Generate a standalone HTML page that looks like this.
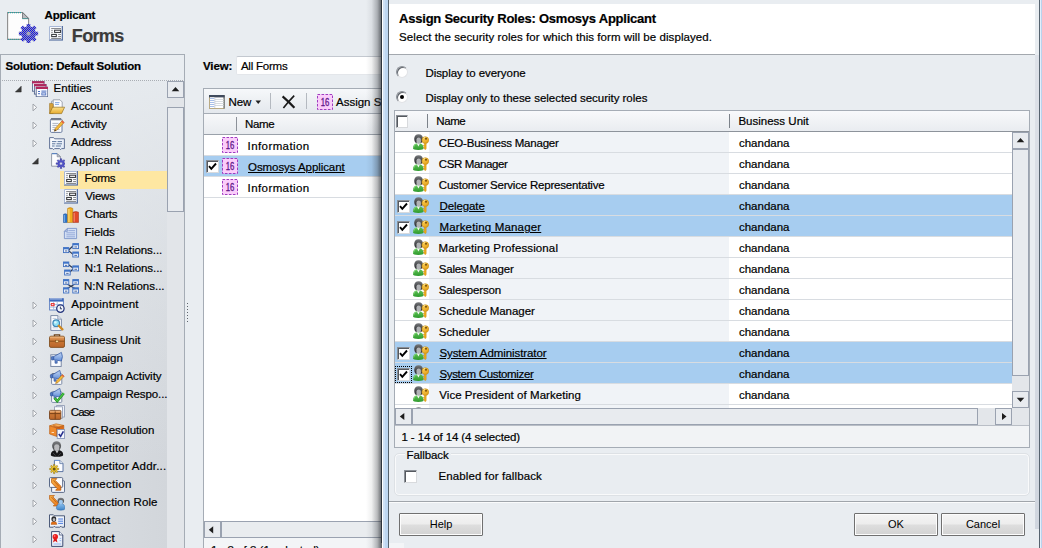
<!DOCTYPE html>
<html lang="en"><head><meta charset="utf-8"><title>Assign Security Roles</title>
<style>
*{box-sizing:border-box;margin:0;padding:0}
html,body{width:1042px;height:548px;overflow:hidden}
body{-webkit-text-stroke-width:.2px;position:relative;background:#e9edf1;font-family:"Liberation Sans",sans-serif;font-size:11px;color:#000}
.a{position:absolute;display:block}
#page{position:absolute;left:0;top:0;width:1042px;height:548px;overflow:hidden}
.t-app{font-weight:bold;font-size:11.5px;line-height:14px;white-space:nowrap}
.t-forms{font-weight:bold;font-size:18px;line-height:22px;color:#3b3b3b;white-space:nowrap}
#lp{left:0;top:54px;width:185px;height:500px;border:1px solid #a5acb5;background:#e9edf1}
#lpbg{left:1px;top:81px;width:166px;height:470px;background:linear-gradient(180deg,rgba(233,237,241,.85) 0,rgba(233,237,241,.64) 80px,rgba(233,237,241,.3) 220px,rgba(233,237,241,0) 380px),linear-gradient(90deg,#e7ebef 0%,#d9dde2 45%,#d2d6db 100%)}
.t-sol{font-weight:bold;font-size:11.5px;line-height:14px;white-space:nowrap}
#dots{left:2px;top:80px;width:182px;height:1px;background:repeating-linear-gradient(90deg,#a9adb3 0 1px,transparent 1px 2px)}
#hl{left:60px;top:171px;width:107px;height:18px;background:#fee7a2}
.tr{font-size:11.5px;line-height:18px;white-space:nowrap;height:18px}
#tsb{left:167px;top:81px;width:17px;height:470px;background:#e2e5e9}
.sbtn{background:#e8ebef;border:1px solid #9aa2b0}
.sbtn svg{display:block}
#tthumb{left:167px;top:107px;width:17px;height:105px;background:#e8ebef;border:1px solid #9aa2b0}
#split{left:187px;top:303px;width:1px;height:20px;background:repeating-linear-gradient(#5f656d 0 1px,transparent 1px 3px)}
.t-view{font-weight:bold;font-size:11.5px;line-height:14px}
#viewsel{left:236px;top:56px;width:200px;height:19px;background:#fff;border:1px solid #e3e6ea;border-top-color:#c3c8cf;border-radius:2px}
#rgrid{left:203px;top:88px;width:200px;height:470px;background:#fff;border:1px solid #a5acb5}
#rtool{left:204px;top:89px;width:200px;height:25px;background:linear-gradient(#f6f8fa,#e4e8ed);border-bottom:1px solid #a5acb5}
.tb{font-size:11.5px;line-height:16px;white-space:nowrap}
.vsep{width:1px;background:#b4b9c0}
#rhead{left:204px;top:114px;width:200px;height:21px;background:linear-gradient(#f7f8fa,#e8ebef);border-bottom:1px solid #9aa1aa}
.rrow{left:204px;width:200px;height:21px;border-bottom:1px solid #d8dce1}
.rrow.sel,.drow.sel{background:#a7cdf0}
.cb{width:13px;height:13px;background:#fff;border:1px solid #8a8f96;border-right-color:#d8dadd;border-bottom-color:#d8dadd;box-shadow:inset 1px 1px 0 #55595f}
.cb svg{display:block;position:absolute;left:0;top:0}
.lnk{text-decoration:underline}
#rhsb{left:204px;top:521px;width:200px;height:17px;background:#e9ecef;border-top:1px solid #a5acb5;border-bottom:1px solid #a5acb5}
#rstat{left:204px;top:538px;width:200px;height:12px;background:#f3f5f7}
#shadow{left:366px;top:-10px;width:16px;height:570px;background:linear-gradient(90deg,rgba(40,44,50,0) 0%,rgba(40,44,50,.07) 35%,rgba(40,44,50,.32) 70%,rgba(40,44,50,.74) 100%)}
#dlg{left:0;top:0;width:1042px;height:548px;pointer-events:none}
#dlg:before{content:"";position:absolute;left:381px;top:-5px;width:670px;height:548px;background:#e9edf1;border-left:1px solid #2d343d}
#dlg:after{content:"";position:absolute;left:382px;top:-5px;width:7px;height:560px;background:linear-gradient(90deg,#fff 0 1px,#cfe1f5 1px 3px,#bdd6f1 3px 6px,#56636f 6px 7px)}
#dhead{left:389px;top:4px;width:646px;height:50px;background:#fff}
#dhead:after{content:"";position:absolute;left:0;top:50px;width:646px;height:1px;background:#a3a8ae}
.d-title{font-weight:bold;font-size:13px;line-height:16px;white-space:nowrap}
.d-sub{font-size:11.5px;line-height:14px;white-space:nowrap}
.dt{font-size:11.5px;line-height:16px;white-space:nowrap}
.radio{width:12px;height:12px;border-radius:50%;background:#fff;border:1px solid #8a8f96;border-right-color:#e1e3e6;border-bottom-color:#e1e3e6;box-shadow:inset 1px 1px 0 #60656c}
.radio i{position:absolute;left:3px;top:3px;width:4px;height:4px;border-radius:50%;background:#000}
#dgrid{left:394px;top:110px;width:636px;height:338px;background:#fff;border:1px solid #a5acb5}
#dghead{left:395px;top:111px;width:634px;height:21px;background:linear-gradient(#f8f9fb,#e9ecf0);border-bottom:1px solid #8d939b}
#namecol{left:429px;top:132px;width:300px;height:276px;background:#f0f3f7}
.drow{left:395px;width:617px;height:21px;border-bottom:1px solid #d8dce1}
#dvsb{left:1012px;top:132px;width:17px;height:276px;background:#e3e6ea}
#dvthumb{left:1012px;top:149px;width:17px;height:227px;background:#e8ebef;border:1px solid #9aa2b0}
#dhsb{left:395px;top:408px;width:634px;height:18px;background:#e3e6ea;border-bottom:1px solid #b9bec6}
#dhthumb{left:412px;top:408px;width:566px;height:17px;background:#e8ebef;border:1px solid #9aa2b0}
#fs{left:394px;top:453px;width:636px;height:43px;border:1px solid #dde1e5;border-radius:5px;box-shadow:inset 0 0 0 1px #f9fafb}
#fsl{left:405px;top:452px;width:46px;height:4px;background:#e9edf1}
#dsep{left:389px;top:501px;width:646px;height:2px;background:linear-gradient(#a0a5ab 0 1px,#fafbfc 1px 2px)}
.btn{-webkit-text-stroke-width:0;height:23px;border:1px solid #707070;background:linear-gradient(#f4f4f4 0,#ededed 48%,#dedede 52%,#d2d2d2 100%);box-shadow:inset 0 0 0 1px #fcfcfc;font-size:11px;line-height:21px;text-align:center;border-radius:1px}
#status{left:395px;top:426px;width:634px;height:21px;background:#f1f3f5}
#rframe{left:1039px;top:-5px;width:3px;height:560px;background:linear-gradient(90deg,#56636f 0 1px,#e4effa 1px 2px,#b9d3ee 2px 3px)}
#rstrip{left:1035px;top:55px;width:4px;height:474px;background:linear-gradient(#dde1e8,#d0d6df)}
.n16{width:16px;height:16px;font-size:10.5px;line-height:16px;text-align:center;color:#5e1488;-webkit-text-stroke-width:.3px;transform:scaleX(.74)}
</style></head>
<body>
<svg width="0" height="0" style="position:absolute"><defs><linearGradient id="g-fold" x1="0" y1="0" x2="0" y2="1"><stop offset="0" stop-color="#fbe08c"/><stop offset="1" stop-color="#e7ab2c"/></linearGradient><linearGradient id="g-brown" x1="0" y1="0" x2="0" y2="1"><stop offset="0" stop-color="#e7a468"/><stop offset=".45" stop-color="#c97634"/><stop offset="1" stop-color="#b9642a"/></linearGradient><linearGradient id="g-org" x1="0" y1="0" x2="1" y2="1"><stop offset="0" stop-color="#f9b54e"/><stop offset="1" stop-color="#e8761a"/></linearGradient><linearGradient id="g-head" x1="0" y1="0" x2="0" y2="1"><stop offset="0" stop-color="#7b7d80"/><stop offset="1" stop-color="#3e4043"/></linearGradient><linearGradient id="g-green" x1="0" y1="0" x2="0" y2="1"><stop offset="0" stop-color="#5fc455"/><stop offset="1" stop-color="#2f9a2e"/></linearGradient><linearGradient id="g-key" x1="0" y1="0" x2="1" y2="1"><stop offset="0" stop-color="#fbd35a"/><stop offset="1" stop-color="#e39a10"/></linearGradient><linearGradient id="g-page" x1="0" y1="0" x2="1" y2="1"><stop offset="0" stop-color="#ffffff"/><stop offset="1" stop-color="#dfe8f6"/></linearGradient><linearGradient id="g-bluep" x1="0" y1="0" x2="0" y2="1"><stop offset="0" stop-color="#8cc0ee"/><stop offset="1" stop-color="#3f84c8"/></linearGradient><linearGradient id="g-mega" x1="0" y1="0" x2="0" y2="1"><stop offset="0" stop-color="#c4d7f4"/><stop offset="1" stop-color="#6490da"/></linearGradient><pattern id="p-dither" width="2" height="2" patternUnits="userSpaceOnUse"><rect width="2" height="2" fill="#9a9aa8"/><rect width="1" height="1" fill="#1010f0"/><rect x="1" y="1" width="1" height="1" fill="#1010f0"/></pattern><linearGradient id="g-head2" x1="0" y1="0" x2="0" y2="1"><stop offset="0" stop-color="#77797c"/><stop offset=".5" stop-color="#4a4c4f"/><stop offset="1" stop-color="#2e3033"/></linearGradient><symbol id="i-role" viewBox="0 0 16 16"><path d="M0 14.2Q0 9.2 5.3 9.2Q10.6 9.2 10.6 14.2Q10.6 15.9 5.3 15.9Q0 15.9 0 14.2Z" fill="url(#g-green)"/><path d="M.6 13.6Q1 10.4 4 9.8" stroke="#8fdc84" stroke-width=".8" fill="none" opacity=".8"/><path d="M3.7 9.3L5.4 12.4L7.1 9.3Z" fill="#f4f6f4"/><path d="M1.2 5Q1.2 .3 5.6 .3Q10 .3 10 5Q10 7.6 8.6 8.8H2.6Q1.2 7.6 1.2 5Z" fill="url(#g-head2)"/><path d="M3.5 5.4Q3.5 3.6 5.7 3.6Q7.9 3.6 7.9 5.4V7.2Q7.9 9.7 5.7 9.7Q3.5 9.7 3.5 7.2Z" fill="#b1b3b6"/><circle cx="12.3" cy="6.1" r="3.4" fill="url(#g-key)" stroke="#bf860e" stroke-width=".6"/><circle cx="13" cy="4.8" r=".95" fill="#6e4606"/><path d="M10.3 4.6Q11 3.4 12.2 3.3" stroke="#fff0b0" stroke-width=".7" fill="none"/><path d="M11.4 9.2H13.2V14.6L12.4 15.8L11.4 15V14.2L10.2 13.6L11.4 13V12.2L10.2 11.6L11.4 11Z" fill="#efaa18" stroke="#bf860e" stroke-width=".4"/></symbol><symbol id="i-16" viewBox="0 0 16 16"><rect x=".5" y=".5" width="15" height="15" fill="#fbcdfb" stroke="#a03cc0" stroke-width="1" stroke-dasharray="2.6 1.4"/></symbol><symbol id="i-form" viewBox="0 0 16 16"><rect x="1" y="0" width="14" height="14.6" fill="#5a72a2"/><rect x="1" y="0" width="12.7" height="13.4" fill="#fafbfd"/><path d="M1.5 13.4V.5H13.7" stroke="#a9b8d6" stroke-width="1" fill="none"/><rect x="3.2" y="2.1" width="9.8" height=".8" fill="#6d6f73"/><rect x="3.2" y="3.9" width="1.6" height=".8" fill="#6d6f73"/><rect x="3.2" y="5.9" width="1.6" height=".8" fill="#6d6f73"/><rect x="6.6" y="4.2" width="6" height="2.2" fill="#fff" stroke="#2f3135" stroke-width="1"/><rect x="3.7" y="8.4" width="4.6" height="2.2" fill="#fff" stroke="#2f3135" stroke-width="1"/><rect x="10.1" y="8.1" width="2.9" height=".8" fill="#6d6f73"/><rect x="10.1" y="10" width="2.9" height=".8" fill="#6d6f73"/><rect x="3.2" y="11.9" width="9.8" height=".9" fill="#6d6f73"/></symbol><symbol id="i-entity32" viewBox="0 0 34 34"><path d="M2.6 3.5H17.5L23.6 9.6V30.4H2.6Z" fill="#fdfdfd" stroke="#8d8d8d" stroke-width="1.1"/><path d="M3 3.6H17.5" stroke="#20a3a3" stroke-width="1.4" stroke-dasharray="1 1"/><path d="M17.5 3.5V9.6H23.6Z" fill="#b9bbbf" stroke="#77797d" stroke-width=".9"/><path d="M17.5 9.6H23.6" stroke="#20a3a3" stroke-width="1" stroke-dasharray="1 1"/><path d="M30.56 22.73L33.14 22.83L33.14 26.37L30.56 26.47L29.81 28.27L31.57 30.17L29.07 32.67L27.17 30.91L25.37 31.66L25.27 34.24L21.73 34.24L21.63 31.66L19.83 30.91L17.93 32.67L15.43 30.17L17.19 28.27L16.44 26.47L13.86 26.37L13.86 22.83L16.44 22.73L17.19 20.93L15.43 19.03L17.93 16.53L19.83 18.29L21.63 17.54L21.73 14.96L25.27 14.96L25.37 17.54L27.17 18.29L29.07 16.53L31.57 19.03L29.81 20.93Z" fill="url(#p-dither)"/><circle cx="23.5" cy="24.6" r="2.2" fill="#a8a8b8"/><path d="M3 30.4H14" stroke="#20a3a3" stroke-width="1" stroke-dasharray="1 1"/></symbol><symbol id="i-entities" viewBox="0 0 16 16"><rect x="0.4" y="0.6" width="11.6" height="9.6" fill="#fafbfe" stroke="#53658c" stroke-width=".9"/><rect x="0" y="0.19999999999999996" width="12.4" height="2.2" fill="#b2285e"/><rect x="2.4" y="3.5" width="11.6" height="9.6" fill="#fafbfe" stroke="#53658c" stroke-width=".9"/><rect x="2" y="3.1" width="12.4" height="2.2" fill="#b2285e"/><rect x="4.2" y="6.2" width="11.6" height="9.6" fill="#fafbfe" stroke="#53658c" stroke-width=".9"/><rect x="3.8000000000000003" y="5.8" width="12.4" height="2.2" fill="#b2285e"/><rect x="6" y="10" width="2" height="1" fill="#4c6fc0"/><rect x="6" y="12.2" width="2" height="1" fill="#4c6fc0"/><rect x="9.4" y="9.6" width="5" height="1" fill="#4c6fc0"/><rect x="9.8" y="11.8" width="4" height="2.2" fill="#cfd9ee" stroke="#4c6fc0" stroke-width=".8"/></symbol><symbol id="i-account" viewBox="0 0 16 16"><path d="M2.5 2.2L10.4 1.4L11.2 9H2.5Z" fill="#eef2f8" stroke="#8a92a0" stroke-width=".7"/><path d="M4.2 .8H11L13.2 3V10H4.2Z" fill="#fbfcfe" stroke="#7f8794" stroke-width=".7"/><path d="M6 3.6H10.5M6 5.4H10" stroke="#78a0e0" stroke-width=".9"/><path d="M.6 4.4H3.4L4.2 5.4V14.4H.6Z" fill="#d8a23a" stroke="#9a7220" stroke-width=".6"/><path d="M3.6 8.2H15.6L12.6 14.6H.6Z" fill="url(#g-fold)" stroke="#9a7220" stroke-width=".7"/></symbol><symbol id="i-activity" viewBox="0 0 16 16"><rect x="1.4" y="2" width="11.6" height="13.4" rx="1.2" fill="#fbfcfe" stroke="#5c6f96" stroke-width=".9"/><path d="M3 1V3.4M5 1V3.4M7 1V3.4M9 1V3.4M11 1V3.4" stroke="#2c3442" stroke-width=".9"/><path d="M3.4 6.4H9.5M3.4 8.4H8.4M3.4 10.4H6.6M3.4 12.6H10.6" stroke="#9aa3b4" stroke-width=".8"/><path d="M13.2 3.6L15.2 5.4L8 13L5.4 14.2L6.2 11.4Z" fill="#f4bb3c" stroke="#a86a18" stroke-width=".6"/><path d="M13.2 3.6L15.2 5.4L14.2 6.5L12.2 4.7Z" fill="#e65a48"/><path d="M5.4 14.2L6 12.2L7.2 13.4Z" fill="#3a3022"/></symbol><symbol id="i-address" viewBox="0 0 16 16"><path d="M.6 2.6H4.6L5.6 3.8H15.4V13.6H12.6L11.6 14.6L10.6 13.6H5.6L4.6 14.6L3.6 13.6H.6Z" fill="url(#g-page)" stroke="#53658c" stroke-width=".9"/><path d="M3 6.6H7.4M8.6 6.6H13M3 8.8H6.4M7.6 8.8H13M3 11H5.6M6.8 11H12" stroke="#5f789f" stroke-width="1"/></symbol><symbol id="i-applicant" viewBox="0 0 16 16"><path d="M2.6 .6H8.2L11.4 3.8V13.2H2.6Z" fill="#fdfdfe" stroke="#7c8494" stroke-width=".8"/><path d="M8.2 .6V3.8H11.4Z" fill="#c9ccd3" stroke="#7c8494" stroke-width=".7"/><path d="M3 .7H8" stroke="#3a74c8" stroke-width=".8"/><path d="M15.22 9.89L16.84 9.86L16.84 11.34L15.22 11.31L14.78 12.38L15.95 13.5L14.9 14.55L13.78 13.38L12.71 13.82L12.74 15.44L11.26 15.44L11.29 13.82L10.22 13.38L9.1 14.55L8.05 13.5L9.22 12.38L8.78 11.31L7.16 11.34L7.16 9.86L8.78 9.89L9.22 8.82L8.05 7.7L9.1 6.65L10.22 7.82L11.29 7.38L11.26 5.76L12.74 5.76L12.71 7.38L13.78 7.82L14.9 6.65L15.95 7.7L14.78 8.82Z" fill="#5254cc" stroke="#2e2f8e" stroke-width=".5"/><circle cx="12" cy="10.6" r="1.5" fill="#d6d8ee" stroke="#2e2f8e" stroke-width=".4"/></symbol><symbol id="i-chart" viewBox="0 0 16 16"><path d="M.4 7.4Q2.2 6 4.2 7.4V15.6H.4Z" fill="#2f76c8" stroke="#1c4f94" stroke-width=".5"/><path d="M.9 8H2V15H.9Z" fill="#7fb2ea" opacity=".8"/><path d="M4.6 1.4Q7.2 -.2 9.8 1.4V15.6H4.6Z" fill="#f2ac1c" stroke="#ad7008" stroke-width=".5"/><path d="M5.2 2H6.6V15H5.2Z" fill="#fbdc7c" opacity=".9"/><path d="M10 5.2Q12.8 3.8 15.6 5.2V15.4H10Z" fill="#e2492a" stroke="#9c2a10" stroke-width=".5"/><path d="M10.6 6H11.8V14.8H10.6Z" fill="#f59a7c" opacity=".8"/></symbol><symbol id="i-fields" viewBox="0 0 16 16"><path d="M4.4 3.4H13.6V13.6H1.4V6.4Z" fill="#d3dff4" stroke="#7b94c8" stroke-width=".9"/><path d="M4.4 3.4V6.4H1.4Z" fill="#aebfe2" stroke="#7b94c8" stroke-width=".7"/><path d="M5.4 5.6H12M3.4 7.8H12M3.4 9.8H12M3.4 11.8H12" stroke="#8ea5d6" stroke-width=".9"/></symbol><symbol id="i-rel1n" viewBox="0 0 16 16"><path d="M5.6 7L10 3M5.6 7.6L10 11.4" stroke="#2f3a52" stroke-width="1.2" fill="none"/><rect x="0.4" y="4.6" width="5.4" height="5" fill="#e6eefb" stroke="#3f6fc0" stroke-width=".9"/><rect x="0.4" y="4.6" width="5.4" height="1.7" fill="#3f74c8"/><rect x="2" y="7.5" width="2.2" height=".9" fill="#4a5f8c"/><rect x="9.8" y="0.6" width="5.8" height="5" fill="#e6eefb" stroke="#3f6fc0" stroke-width=".9"/><rect x="9.8" y="0.6" width="5.8" height="1.7" fill="#3f74c8"/><rect x="11.4" y="3.5" width="2.5999999999999996" height=".9" fill="#4a5f8c"/><rect x="9.8" y="9" width="5.8" height="5" fill="#e6eefb" stroke="#3f6fc0" stroke-width=".9"/><rect x="9.8" y="9" width="5.8" height="1.7" fill="#3f74c8"/><rect x="11.4" y="11.9" width="2.5999999999999996" height=".9" fill="#4a5f8c"/></symbol><symbol id="i-reln1" viewBox="0 0 16 16"><path d="M5.6 3.8L10 7M7 11L10 8" stroke="#2f3a52" stroke-width="1.2" fill="none"/><rect x="0.4" y="1" width="5.4" height="4.6" fill="#e6eefb" stroke="#3f6fc0" stroke-width=".9"/><rect x="0.4" y="1" width="5.4" height="1.7" fill="#3f74c8"/><rect x="2" y="3.9" width="2.2" height=".9" fill="#4a5f8c"/><rect x="1.6" y="9" width="5.6" height="5" fill="#e6eefb" stroke="#3f6fc0" stroke-width=".9"/><rect x="1.6" y="9" width="5.6" height="1.7" fill="#3f74c8"/><rect x="3.2" y="11.9" width="2.3999999999999995" height=".9" fill="#4a5f8c"/><rect x="9.8" y="4.9" width="5.8" height="5" fill="#e6eefb" stroke="#3f6fc0" stroke-width=".9"/><rect x="9.8" y="4.9" width="5.8" height="1.7" fill="#3f74c8"/><rect x="11.4" y="7.800000000000001" width="2.5999999999999996" height=".9" fill="#4a5f8c"/></symbol><symbol id="i-relnn" viewBox="0 0 16 16"><path d="M4 5L12 9.5M12 5L4 9.5" stroke="#2f3a52" stroke-width="1.3" fill="none"/><rect x="0.4" y="0.6" width="5.4" height="4.7" fill="#e6eefb" stroke="#3f6fc0" stroke-width=".9"/><rect x="0.4" y="0.6" width="5.4" height="1.7" fill="#3f74c8"/><rect x="2" y="3.5" width="2.2" height=".9" fill="#4a5f8c"/><rect x="9.8" y="0.6" width="5.8" height="4.7" fill="#e6eefb" stroke="#3f6fc0" stroke-width=".9"/><rect x="9.8" y="0.6" width="5.8" height="1.7" fill="#3f74c8"/><rect x="11.4" y="3.5" width="2.5999999999999996" height=".9" fill="#4a5f8c"/><rect x="0.4" y="8.8" width="5.4" height="5.2" fill="#e6eefb" stroke="#3f6fc0" stroke-width=".9"/><rect x="0.4" y="8.8" width="5.4" height="1.7" fill="#3f74c8"/><rect x="2" y="11.700000000000001" width="2.2" height=".9" fill="#4a5f8c"/><rect x="9.8" y="8.8" width="5.8" height="5.2" fill="#e6eefb" stroke="#3f6fc0" stroke-width=".9"/><rect x="9.8" y="8.8" width="5.8" height="1.7" fill="#3f74c8"/><rect x="11.4" y="11.700000000000001" width="2.5999999999999996" height=".9" fill="#4a5f8c"/></symbol><symbol id="i-appt" viewBox="0 0 16 16"><rect x=".6" y="1.6" width="13.8" height="11.4" fill="#fcfdff" stroke="#5a7cc0" stroke-width=".9"/><rect x=".6" y="1.6" width="13.8" height="3" fill="#3d69bc"/><path d="M2 .8V2.8M4 .8V2.8M6 .8V2.8M8 .8V2.8M10 .8V2.8M12 .8V2.8" stroke="#e8eefb" stroke-width=".8"/><path d="M1 7.5H14M1 10.2H8.5M4.6 5V12.6M8.2 5V9" stroke="#9db6de" stroke-width=".8"/><rect x="1.8" y="6" width="3.8" height="3.2" fill="#e83434"/><rect x="2.8" y="6.9" width="1.6" height="1.3" fill="#fbd5d5"/><circle cx="11.4" cy="11.6" r="3.7" fill="#f1f4fb" stroke="#27387e" stroke-width="1.3"/><path d="M11.4 9.6V11.8H13" stroke="#1d2c55" stroke-width=".9" fill="none"/></symbol><symbol id="i-article" viewBox="0 0 16 16"><path d="M1.8 .6H8.8L12.4 4.2V15.4H1.8Z" fill="#fcfdff" stroke="#6f7f9e" stroke-width=".9"/><path d="M8.8 .6V4.2H12.4" fill="#dfe6f2" stroke="#6f7f9e" stroke-width=".7"/><path d="M3.6 3.4H7.4M3.6 12.8H9" stroke="#b0bbd0" stroke-width=".8"/><circle cx="7.2" cy="8.2" r="3.3" fill="#8fe0f4" stroke="#3f86b8" stroke-width="1.2"/><circle cx="6.4" cy="7.4" r="1.2" fill="#dff7fd"/><path d="M9.8 10.8L13.4 14.4" stroke="#cf8a24" stroke-width="2.3" stroke-linecap="round"/></symbol><symbol id="i-bu" viewBox="0 0 16 16"><path d="M5.4 3.4V1.8H10.6V3.4" fill="none" stroke="#6b431c" stroke-width="1.3"/><rect x=".5" y="3.2" width="15" height="11.2" rx="1.4" fill="url(#g-brown)" stroke="#7a4716" stroke-width=".8"/><path d="M.8 8.2H15.2" stroke="#8a4f1c" stroke-width="1"/><path d="M1 4.2H15" stroke="#f3c48e" stroke-width=".8" opacity=".8"/><rect x="6.6" y="7.2" width="2.8" height="2.2" fill="#f7d896" stroke="#7a4716" stroke-width=".5"/></symbol><symbol id="i-campaign" viewBox="0 0 16 16"><rect x="1.8" y="3.8" width="10.4" height="11.6" fill="#fcfdff" stroke="#6f7f9e" stroke-width=".9"/><path d="M4.4 5.8L12.4 1.4Q14.4 5.5 12.4 10L4.4 8.6Z" fill="url(#g-mega)" stroke="#3a5fa8" stroke-width=".8"/><rect x="2.4" y="5.4" width="2.4" height="3.6" rx=".8" fill="#4f78c4" stroke="#2f4f94" stroke-width=".6"/><path d="M6 9V12.2H8.2V9.4" fill="#5f88d0" stroke="#2f4f94" stroke-width=".6"/></symbol><symbol id="i-campact" viewBox="0 0 16 16"><rect x="2.6" y="4.6" width="10.2" height="10.8" rx="1" fill="#fcfdff" stroke="#6f7f9e" stroke-width=".9"/><path d="M4 4V5.6M6 4V5.6M8 4V5.6M10 4V5.6" stroke="#2c3442" stroke-width=".7"/><path d="M3.4 5.8L10.8 1.4Q12.8 5.5 10.8 10L3.4 8.6Z" fill="url(#g-mega)" stroke="#3a5fa8" stroke-width=".8"/><rect x="1.4" y="5.4" width="2.4" height="3.6" rx=".8" fill="#4f78c4" stroke="#2f4f94" stroke-width=".6"/><path d="M5 9V12.2H7.2V9.4" fill="#5f88d0" stroke="#2f4f94" stroke-width=".6"/><path d="M13.4 5.6L15.2 7.2L9 13.6L6.6 14.6L7.4 12Z" fill="#f4bb3c" stroke="#a86a18" stroke-width=".6"/><path d="M13.4 5.6L15.2 7.2L14.3 8.1L12.5 6.5Z" fill="#e65a48"/></symbol><symbol id="i-campresp" viewBox="0 0 16 16"><rect x="2.6" y="4.6" width="10.2" height="10.8" rx="1" fill="#fcfdff" stroke="#6f7f9e" stroke-width=".9"/><path d="M3.4 5.8L10.8 1.4Q12.8 5.5 10.8 10L3.4 8.6Z" fill="url(#g-mega)" stroke="#3a5fa8" stroke-width=".8"/><rect x="1.4" y="5.4" width="2.4" height="3.6" rx=".8" fill="#4f78c4" stroke="#2f4f94" stroke-width=".6"/><path d="M5 9V12.2H7.2V9.4" fill="#5f88d0" stroke="#2f4f94" stroke-width=".6"/><path d="M5.6 11L8.2 14.2L14.8 6.2" fill="none" stroke="#1f8f1f" stroke-width="2.5"/><path d="M5.6 11L8.2 14.2L14.8 6.2" fill="none" stroke="#4fc84a" stroke-width="1.1"/></symbol><symbol id="i-case" viewBox="0 0 16 16"><rect x="7.6" y=".6" width="7.8" height="11.4" fill="#eef2fa" stroke="#8a96b0" stroke-width=".8"/><rect x="5.6" y="1.8" width="7.8" height="11.4" fill="#fcfdff" stroke="#8a96b0" stroke-width=".8"/><rect x=".5" y="5.4" width="11.4" height="9" rx="1" fill="url(#g-brown)" stroke="#6e3a14" stroke-width=".8"/><path d="M.8 8.6H11.6M6.2 5.6V14.2" stroke="#7a4218" stroke-width="1"/><path d="M1 6.2H11.4" stroke="#f3c090" stroke-width=".7" opacity=".8"/></symbol><symbol id="i-caseres" viewBox="0 0 16 16"><path d="M.6 2.8L7 .8L14.8 2.4L8 5Z" fill="#f7b25c" stroke="#b85c14" stroke-width=".6"/><path d="M.6 2.8V11L7.6 13.4V5Z" fill="#ef8a2c" stroke="#b85c14" stroke-width=".6"/><path d="M14.8 2.4V9.8L7.6 13.4V5Z" fill="#d96a18" stroke="#b85c14" stroke-width=".6"/><path d="M4 1.8L10.8 3.8V6L4.6 4Z" fill="#b84c10" opacity=".55"/><rect x="2.6" y="9" width="2.4" height=".9" fill="#fde6c8"/><rect x="8.2" y="6.6" width="7.4" height="8.8" fill="#f4f7fd" stroke="#7f8fb4" stroke-width=".8"/><path d="M9.8 11L11.6 13.4L14.4 8.4" fill="none" stroke="#27308e" stroke-width="1.6"/></symbol><symbol id="i-competitor" viewBox="0 0 16 16"><path d="M1.8 14Q1.8 9 8 9Q14.2 9 14.2 14Q14.2 15.8 8 15.8Q1.8 15.8 1.8 14Z" fill="#161618"/><path d="M6.2 9.2L8 12.4L9.8 9.2Z" fill="#c9cacc"/><path d="M4 12L6.6 14.6M12 12L9.4 14.6" stroke="#4a4b4e" stroke-width=".8"/><ellipse cx="7.6" cy="5" rx="4.5" ry="4.8" fill="url(#g-head)"/><path d="M5.2 5.2Q5.2 3.2 7.8 3.2Q10.3 3.2 10.3 5.2V7.2Q10.3 9.9 7.8 9.9Q5.2 9.9 5.2 7.2Z" fill="#b9babd"/></symbol><symbol id="i-compaddr" viewBox="0 0 16 16"><path d="M5.4 1.4H10.8L14 4.6V12.6H5.4Z" fill="#fbfcff" stroke="#4f6a9c" stroke-width=".9"/><path d="M10.8 1.4V4.6H14" fill="#dfe6f2" stroke="#4f6a9c" stroke-width=".7"/><path d="M5.8 1.5H10.6" stroke="#6f9ae0" stroke-width=".9"/><path d="M8.23 9.34L9.75 9.31L9.75 10.69L8.23 10.66L7.81 11.67L8.91 12.73L7.93 13.71L6.87 12.61L5.86 13.03L5.89 14.55L4.51 14.55L4.54 13.03L3.53 12.61L2.47 13.71L1.49 12.73L2.59 11.67L2.17 10.66L0.65 10.69L0.65 9.31L2.17 9.34L2.59 8.33L1.49 7.27L2.47 6.29L3.53 7.39L4.54 6.97L4.51 5.45L5.89 5.45L5.86 6.97L6.87 7.39L7.93 6.29L8.91 7.27L7.81 8.33Z" fill="#ebc42c" stroke="#8a6a10" stroke-width=".5"/><circle cx="5.2" cy="10" r="1.5" fill="#6a5418"/></symbol><symbol id="i-connection" viewBox="0 0 16 16"><rect x="2.6" y="3.8" width="13" height="11.6" rx="1" fill="#f4f7fd" stroke="#4a5a7c" stroke-width=".9"/><rect x=".5" y=".6" width="13.2" height="9.8" rx="1" fill="#fbfcff" stroke="#4a5a7c" stroke-width=".9"/><path d="M2.6 1.6H7.8L6.2 3.4L11.8 9.2V13.2H6.6L8.2 11.6L2.6 5.8Z" fill="url(#g-org)" stroke="#b85a0c" stroke-width=".8"/><path d="M4.4 3.4L10 9.4" stroke="#b85a0c" stroke-width=".8"/></symbol><symbol id="i-connrole" viewBox="0 0 16 16"><g transform="translate(-1.8,-1.2) scale(.92)"><path d="M2.6 1.6H7.8L6.2 3.4L11.8 9.2V13.2H6.6L8.2 11.6L2.6 5.8Z" fill="url(#g-org)" stroke="#b85a0c" stroke-width=".8"/><path d="M4.4 3.4L10 9.4" stroke="#b85a0c" stroke-width=".8"/></g><path d="M7.4 13.6Q7.4 8.6 11.8 8.6Q16 8.6 16 13.6Q16 15.2 11.8 15.2Q7.4 15.2 7.4 13.6Z" fill="url(#g-bluep)" stroke="#2f68a8" stroke-width=".5"/><ellipse cx="11.8" cy="5.8" rx="3.3" ry="3" fill="url(#g-head)"/><path d="M9.8 6.4Q9.8 5 11.8 5Q13.8 5 13.8 6.4V7.6Q13.8 9.4 11.8 9.4Q9.8 9.4 9.8 7.6Z" fill="#9fc8ee"/></symbol><symbol id="i-contact" viewBox="0 0 16 16"><path d="M.5 1.8H4.4L5.4 2.8H15.5V14.2H12.8L11.8 13.2L10.8 14.2H6.4L5.4 13.2L4.4 14.2H.5Z" fill="url(#g-page)" stroke="#3b4b6c" stroke-width=".9"/><path d="M2 11.4Q2 8.4 4.8 8.4Q7.8 8.4 7.8 11.4Z" fill="#e07018" stroke="#a84a08" stroke-width=".4"/><ellipse cx="4.8" cy="6" rx="2.4" ry="2.7" fill="#2e2f32"/><ellipse cx="5" cy="6.6" rx="1.3" ry="1.7" fill="#b9babd"/><path d="M9.2 6H14M9.2 8.2H14M9.2 10.4H14" stroke="#4f7fe0" stroke-width="1"/></symbol><symbol id="i-contract" viewBox="0 0 16 16"><path d="M2.6 .6H10.4L13.8 4V15.4H2.6Z" fill="url(#g-page)" stroke="#2c3c64" stroke-width=".9"/><path d="M10.4 .6V4H13.8" fill="#eef2fa" stroke="#2c3c64" stroke-width=".7"/><path d="M10.6 7.4H12.2M10.6 9.6H12.2M4.4 13H12" stroke="#8fb0ec" stroke-width=".9"/><path d="M5 7.6L4 11.4L6.2 10L8.4 11.4L7.6 7.6Z" fill="#d81818"/><circle cx="6.3" cy="5.8" r="2.7" fill="#e81c1c"/><circle cx="5.6" cy="5" r=".9" fill="#f88" opacity=".8"/></symbol><symbol id="i-new" viewBox="0 0 16 16"><rect x=".5" y="1.5" width="14.6" height="13" fill="#fff" stroke="#b9aa84" stroke-width="1"/><path d="M15.1 1.5V14.5" stroke="#56606e" stroke-width="1"/><rect x="0" y="1" width="15.6" height="2.4" fill="#3f4a5c"/><rect x="1" y="3.4" width="4.4" height="10.6" fill="#fff"/><path d="M1 4.5H5.4M1 6.5H5.4M1 8.5H5.4M1 10.5H5.4M1 12.5H5.4" stroke="#a9c0ea" stroke-width="1"/><path d="M6 5.5H14.6M6 7.5H14.6M6 9.5H14.6M6 11.5H14.6" stroke="#d4d8de" stroke-width=".9"/><path d="M5.8 3.4V14" stroke="#c8ccd4" stroke-width=".8"/></symbol></defs></svg>
<div id="page">
<svg class="a" style="left:5px;top:9px" width="34" height="34" ><use href="#i-entity32"/></svg><div class="a t-app" style="left:44.61px;top:8px;letter-spacing:-0.202px">Applicant</div>
<svg class="a" style="left:48px;top:26px" width="16" height="16" ><use href="#i-form"/></svg><div class="a t-forms" style="left:71.87px;top:25px;letter-spacing:-0.662px">Forms</div>
<div class="a" id="lp"></div>
<div class="a" id="lpbg"></div>
<div class="a t-sol" style="left:5.45px;top:59px;letter-spacing:-0.225px">Solution: Default Solution</div>
<div class="a" id="dots"></div>
<div class="a" id="tsb"></div><div class="a" id="hl"></div>
<svg class="a" style="left:14px;top:85px" width="9" height="9"><path d="M7.2 1.2V7H1.4Z" fill="#3a3a3a" stroke="#262626" stroke-width=".5"/></svg><svg class="a" style="left:32px;top:81px" width="16" height="16" ><use href="#i-entities"/></svg><div class="a tr" style="left:53.49px;top:79px;letter-spacing:0.058px">Entities</div>
<svg class="a" style="left:31px;top:102px" width="9" height="11"><path d="M2 2L5.7 5.4L2 8.8Z" fill="#fcfcfd" stroke="#a0a4aa" stroke-width="1"/></svg><svg class="a" style="left:49px;top:99px" width="16" height="16" ><use href="#i-account"/></svg><div class="a tr" style="left:71.07px;top:97px;letter-spacing:0.024px">Account</div>
<svg class="a" style="left:31px;top:120px" width="9" height="11"><path d="M2 2L5.7 5.4L2 8.8Z" fill="#fcfcfd" stroke="#a0a4aa" stroke-width="1"/></svg><svg class="a" style="left:49px;top:117px" width="16" height="16" ><use href="#i-activity"/></svg><div class="a tr" style="left:71.1px;top:115px;letter-spacing:-0.117px">Activity</div>
<svg class="a" style="left:31px;top:138px" width="9" height="11"><path d="M2 2L5.7 5.4L2 8.8Z" fill="#fcfcfd" stroke="#a0a4aa" stroke-width="1"/></svg><svg class="a" style="left:49px;top:135px" width="16" height="16" ><use href="#i-address"/></svg><div class="a tr" style="left:71.09px;top:133px;letter-spacing:-0.237px">Address</div>
<svg class="a" style="left:31px;top:157px" width="9" height="9"><path d="M7.2 1.2V7H1.4Z" fill="#3a3a3a" stroke="#262626" stroke-width=".5"/></svg><svg class="a" style="left:49px;top:153px" width="16" height="16" ><use href="#i-applicant"/></svg><div class="a tr" style="left:71.09px;top:151px;letter-spacing:0.167px">Applicant</div>
<svg class="a" style="left:63px;top:171px" width="16" height="16" ><use href="#i-form"/></svg><div class="a tr" style="left:84.51px;top:169px;letter-spacing:-0.391px">Forms</div>
<svg class="a" style="left:63px;top:189px" width="16" height="16" ><use href="#i-form"/></svg><div class="a tr" style="left:85.28px;top:187px;letter-spacing:-0.201px">Views</div>
<svg class="a" style="left:63px;top:207px" width="16" height="16" ><use href="#i-chart"/></svg><div class="a tr" style="left:84.83px;top:205px;letter-spacing:-0.24px">Charts</div>
<svg class="a" style="left:63px;top:225px" width="16" height="16" ><use href="#i-fields"/></svg><div class="a tr" style="left:84.52px;top:223px;letter-spacing:-0.103px">Fields</div>
<svg class="a" style="left:63px;top:243px" width="16" height="16" ><use href="#i-rel1n"/></svg><div class="a tr" style="left:84.46px;top:241px;letter-spacing:-0.052px">1:N Relations...</div>
<svg class="a" style="left:63px;top:261px" width="16" height="16" ><use href="#i-reln1"/></svg><div class="a tr" style="left:84.66px;top:259px;letter-spacing:-0.049px">N:1 Relations...</div>
<svg class="a" style="left:63px;top:279px" width="16" height="16" ><use href="#i-relnn"/></svg><div class="a tr" style="left:83.93px;top:277px;letter-spacing:0.008px">N:N Relations...</div>
<svg class="a" style="left:31px;top:300px" width="9" height="11"><path d="M2 2L5.7 5.4L2 8.8Z" fill="#fcfcfd" stroke="#a0a4aa" stroke-width="1"/></svg><svg class="a" style="left:49px;top:297px" width="16" height="16" ><use href="#i-appt"/></svg><div class="a tr" style="left:71.22px;top:295px;letter-spacing:0.272px">Appointment</div>
<svg class="a" style="left:31px;top:318px" width="9" height="11"><path d="M2 2L5.7 5.4L2 8.8Z" fill="#fcfcfd" stroke="#a0a4aa" stroke-width="1"/></svg><svg class="a" style="left:49px;top:315px" width="16" height="16" ><use href="#i-article"/></svg><div class="a tr" style="left:71.11px;top:313px;letter-spacing:0.036px">Article</div>
<svg class="a" style="left:31px;top:336px" width="9" height="11"><path d="M2 2L5.7 5.4L2 8.8Z" fill="#fcfcfd" stroke="#a0a4aa" stroke-width="1"/></svg><svg class="a" style="left:49px;top:333px" width="16" height="16" ><use href="#i-bu"/></svg><div class="a tr" style="left:70.45px;top:331px;letter-spacing:-0.025px">Business Unit</div>
<svg class="a" style="left:31px;top:354px" width="9" height="11"><path d="M2 2L5.7 5.4L2 8.8Z" fill="#fcfcfd" stroke="#a0a4aa" stroke-width="1"/></svg><svg class="a" style="left:49px;top:351px" width="16" height="16" ><use href="#i-campaign"/></svg><div class="a tr" style="left:70.79px;top:349px;letter-spacing:-0.049px">Campaign</div>
<svg class="a" style="left:31px;top:372px" width="9" height="11"><path d="M2 2L5.7 5.4L2 8.8Z" fill="#fcfcfd" stroke="#a0a4aa" stroke-width="1"/></svg><svg class="a" style="left:49px;top:369px" width="16" height="16" ><use href="#i-campact"/></svg><div class="a tr" style="left:70.78px;top:367px;letter-spacing:-0.039px">Campaign Activity</div>
<svg class="a" style="left:31px;top:390px" width="9" height="11"><path d="M2 2L5.7 5.4L2 8.8Z" fill="#fcfcfd" stroke="#a0a4aa" stroke-width="1"/></svg><svg class="a" style="left:49px;top:387px" width="16" height="16" ><use href="#i-campresp"/></svg><div class="a tr" style="left:70.71px;top:385px;letter-spacing:-0.104px">Campaign Respo...</div>
<svg class="a" style="left:31px;top:408px" width="9" height="11"><path d="M2 2L5.7 5.4L2 8.8Z" fill="#fcfcfd" stroke="#a0a4aa" stroke-width="1"/></svg><svg class="a" style="left:49px;top:405px" width="16" height="16" ><use href="#i-case"/></svg><div class="a tr" style="left:70.85px;top:403px;letter-spacing:-0.913px">Case</div>
<svg class="a" style="left:31px;top:426px" width="9" height="11"><path d="M2 2L5.7 5.4L2 8.8Z" fill="#fcfcfd" stroke="#a0a4aa" stroke-width="1"/></svg><svg class="a" style="left:49px;top:423px" width="16" height="16" ><use href="#i-caseres"/></svg><div class="a tr" style="left:70.81px;top:421px;letter-spacing:-0.061px">Case Resolution</div>
<svg class="a" style="left:31px;top:444px" width="9" height="11"><path d="M2 2L5.7 5.4L2 8.8Z" fill="#fcfcfd" stroke="#a0a4aa" stroke-width="1"/></svg><svg class="a" style="left:49px;top:441px" width="16" height="16" ><use href="#i-competitor"/></svg><div class="a tr" style="left:70.79px;top:439px;letter-spacing:0.193px">Competitor</div>
<svg class="a" style="left:31px;top:462px" width="9" height="11"><path d="M2 2L5.7 5.4L2 8.8Z" fill="#fcfcfd" stroke="#a0a4aa" stroke-width="1"/></svg><svg class="a" style="left:49px;top:459px" width="16" height="16" ><use href="#i-compaddr"/></svg><div class="a tr" style="left:70.78px;top:457px;letter-spacing:0.196px">Competitor Addr...</div>
<svg class="a" style="left:31px;top:480px" width="9" height="11"><path d="M2 2L5.7 5.4L2 8.8Z" fill="#fcfcfd" stroke="#a0a4aa" stroke-width="1"/></svg><svg class="a" style="left:49px;top:477px" width="16" height="16" ><use href="#i-connection"/></svg><div class="a tr" style="left:70.78px;top:475px;letter-spacing:0.27px">Connection</div>
<svg class="a" style="left:31px;top:498px" width="9" height="11"><path d="M2 2L5.7 5.4L2 8.8Z" fill="#fcfcfd" stroke="#a0a4aa" stroke-width="1"/></svg><svg class="a" style="left:49px;top:495px" width="16" height="16" ><use href="#i-connrole"/></svg><div class="a tr" style="left:70.79px;top:493px;letter-spacing:0.118px">Connection Role</div>
<svg class="a" style="left:31px;top:516px" width="9" height="11"><path d="M2 2L5.7 5.4L2 8.8Z" fill="#fcfcfd" stroke="#a0a4aa" stroke-width="1"/></svg><svg class="a" style="left:49px;top:513px" width="16" height="16" ><use href="#i-contact"/></svg><div class="a tr" style="left:70.81px;top:511px;letter-spacing:-0.055px">Contact</div>
<svg class="a" style="left:31px;top:534px" width="9" height="11"><path d="M2 2L5.7 5.4L2 8.8Z" fill="#fcfcfd" stroke="#a0a4aa" stroke-width="1"/></svg><svg class="a" style="left:49px;top:531px" width="16" height="16" ><use href="#i-contract"/></svg><div class="a tr" style="left:70.81px;top:529px;letter-spacing:0.048px">Contract</div>
<div class="a sbtn" style="left:167px;top:81px;width:17px;height:17px"><svg width="15" height="15"><path d="M3.7 9.3L7.5 5L11.3 9.3Z" fill="#1d1d1d"/></svg></div><div class="a" id="tthumb"></div>
<div class="a" id="split"></div>
<div class="a t-view" style="left:203.07px;top:59px;letter-spacing:-0.152px">View:</div>
<div class="a" id="viewsel"></div>
<div class="a tb" style="left:240.91px;top:58px;letter-spacing:-0.217px">All Forms</div>
<div class="a" id="rgrid"></div>
<div class="a" id="rtool"></div>
<svg class="a" style="left:209px;top:94px" width="16" height="16" ><use href="#i-new"/></svg><div class="a tb" style="left:228.44px;top:94px;letter-spacing:-0.015px">New</div>
<svg class="a" style="left:255px;top:100px" width="7" height="5"><path d="M0.5 0.5H6L3.2 4Z" fill="#222"/></svg><div class="a vsep" style="left:270px;top:93px;height:16px"></div><svg class="a" style="left:280px;top:94px" width="17" height="16"><path d="M2.6 2.4Q8 7 14.4 13.8" stroke="#1a1a1a" stroke-width="2.2" fill="none"/><path d="M14.2 1.6Q8 8 3.4 14" stroke="#1a1a1a" stroke-width="1.6" fill="none"/></svg><div class="a vsep" style="left:306px;top:93px;height:16px"></div><svg class="a" style="left:317px;top:94px" width="16" height="16" ><use href="#i-16"/></svg><div class="a n16" style="left:317px;top:94px">16</div><div class="a tb" style="left:336px;top:94px">Assign Security Roles</div>
<div class="a" id="rhead"></div><div class="a vsep" style="left:236px;top:117px;height:14px;background:#8c9199"></div><div class="a tb" style="left:245.12px;top:116px;letter-spacing:-0.366px">Name</div>
<div class="a rrow" style="top:135px"></div><svg class="a" style="left:222px;top:137px" width="16" height="16" ><use href="#i-16"/></svg><div class="a n16" style="left:222px;top:137px">16</div><div class="a tb" style="left:247.6px;top:138px;letter-spacing:0.406px">Information</div>
<div class="a rrow sel" style="top:156px"></div><div class="a cb" style="left:206px;top:160px"><svg width="11" height="11"><path d="M2 5.2L4.3 7.8L9 2.5" stroke="#000" stroke-width="1.9" fill="none"/></svg></div><svg class="a" style="left:222px;top:158px" width="16" height="16" ><use href="#i-16"/></svg><div class="a n16" style="left:222px;top:158px">16</div><div class="a tb lnk" style="left:248px;top:159px;letter-spacing:-0.067px">Osmosys Applicant</div>
<div class="a rrow" style="top:177px"></div><svg class="a" style="left:222px;top:179px" width="16" height="16" ><use href="#i-16"/></svg><div class="a n16" style="left:222px;top:179px">16</div><div class="a tb" style="left:247.6px;top:180px;letter-spacing:0.406px">Information</div>
<div class="a" id="rhsb"></div><div class="a" id="rstat"></div><div class="a sbtn" style="left:204px;top:521px;width:17px;height:17px"><svg width="15" height="15"><path d="M8.2 4.2L3.8 7.8L8.2 11.4Z" fill="#1d1d1d"/></svg></div><div class="a sbtn" style="left:221px;top:521px;width:200px;height:17px;background:#e9ecef"></div>
<div class="a tb" style="left:211px;top:542px">1 - 3 of 3 (1 selected)</div>
</div>
<div class="a" id="shadow"></div>
<div class="a" id="dlg">
<div class="a" id="dhead"></div>
<div class="a d-title" style="left:399.12px;top:11px;letter-spacing:-0.234px">Assign Security Roles: Osmosys Applicant</div>
<div class="a d-sub" style="left:399.11px;top:30px;letter-spacing:0.065px">Select the security roles for which this form will be displayed.</div>
<div class="a radio" style="left:395.5px;top:65.5px"></div><div class="a dt" style="left:425.38px;top:65px;letter-spacing:-0.038px">Display to everyone</div>
<div class="a radio" style="left:395.5px;top:90.5px"><i></i></div><div class="a dt" style="left:425.38px;top:90px;letter-spacing:-0.024px">Display only to these selected security roles</div>
<div class="a" id="dgrid"></div>
<div class="a" id="dghead"></div>
<div class="a cb" style="left:396px;top:115px;width:12px"></div><div class="a vsep" style="left:427px;top:114px;height:14px;background:#7c828a"></div><div class="a dt" style="left:436.32px;top:113px;letter-spacing:-0.431px">Name</div>
<div class="a vsep" style="left:729px;top:114px;height:14px;background:#7c828a"></div><div class="a dt" style="left:738.4px;top:113px;letter-spacing:0.009px">Business Unit</div>
<div class="a" id="namecol"></div>
<div class="a drow" style="top:132px"></div><svg class="a" style="left:413px;top:134px" width="16" height="16" ><use href="#i-role"/></svg><div class="a dt" style="left:438.8px;top:135px;letter-spacing:-0.207px">CEO-Business Manager</div>
<div class="a dt" style="left:738.97px;top:135px">chandana</div>
<div class="a drow" style="top:153px"></div><svg class="a" style="left:413px;top:155px" width="16" height="16" ><use href="#i-role"/></svg><div class="a dt" style="left:438.8px;top:156px;letter-spacing:-0.371px">CSR Manager</div>
<div class="a dt" style="left:738.97px;top:156px">chandana</div>
<div class="a drow" style="top:174px"></div><svg class="a" style="left:413px;top:176px" width="16" height="16" ><use href="#i-role"/></svg><div class="a dt" style="left:438.8px;top:177px;letter-spacing:-0.202px">Customer Service Representative</div>
<div class="a dt" style="left:738.97px;top:177px">chandana</div>
<div class="a drow sel" style="top:195px"></div><div class="a cb" style="left:397px;top:200px"><svg width="11" height="11"><path d="M2 5.2L4.3 7.8L9 2.5" stroke="#000" stroke-width="1.9" fill="none"/></svg></div><svg class="a" style="left:413px;top:197px" width="16" height="16" ><use href="#i-role"/></svg><div class="a dt lnk" style="left:439.43px;top:198px;letter-spacing:-0.092px">Delegate</div>
<div class="a dt" style="left:738.97px;top:198px">chandana</div>
<div class="a drow sel" style="top:216px"></div><div class="a cb" style="left:397px;top:221px"><svg width="11" height="11"><path d="M2 5.2L4.3 7.8L9 2.5" stroke="#000" stroke-width="1.9" fill="none"/></svg></div><svg class="a" style="left:413px;top:218px" width="16" height="16" ><use href="#i-role"/></svg><div class="a dt lnk" style="left:439.43px;top:219px;letter-spacing:0.161px">Marketing Manager</div>
<div class="a dt" style="left:738.97px;top:219px">chandana</div>
<div class="a drow" style="top:237px"></div><svg class="a" style="left:413px;top:239px" width="16" height="16" ><use href="#i-role"/></svg><div class="a dt" style="left:438.48px;top:240px;letter-spacing:0.119px">Marketing Professional</div>
<div class="a dt" style="left:738.97px;top:240px">chandana</div>
<div class="a drow" style="top:258px"></div><svg class="a" style="left:413px;top:260px" width="16" height="16" ><use href="#i-role"/></svg><div class="a dt" style="left:438.78px;top:261px;letter-spacing:-0.199px">Sales Manager</div>
<div class="a dt" style="left:738.97px;top:261px">chandana</div>
<div class="a drow" style="top:279px"></div><svg class="a" style="left:413px;top:281px" width="16" height="16" ><use href="#i-role"/></svg><div class="a dt" style="left:438.78px;top:282px;letter-spacing:-0.152px">Salesperson</div>
<div class="a dt" style="left:738.97px;top:282px">chandana</div>
<div class="a drow" style="top:300px"></div><svg class="a" style="left:413px;top:302px" width="16" height="16" ><use href="#i-role"/></svg><div class="a dt" style="left:438.78px;top:303px;letter-spacing:-0.027px">Schedule Manager</div>
<div class="a dt" style="left:738.97px;top:303px">chandana</div>
<div class="a drow" style="top:321px"></div><svg class="a" style="left:413px;top:323px" width="16" height="16" ><use href="#i-role"/></svg><div class="a dt" style="left:438.78px;top:324px;letter-spacing:-0.044px">Scheduler</div>
<div class="a dt" style="left:738.97px;top:324px">chandana</div>
<div class="a drow sel" style="top:342px"></div><div class="a cb" style="left:397px;top:347px"><svg width="11" height="11"><path d="M2 5.2L4.3 7.8L9 2.5" stroke="#000" stroke-width="1.9" fill="none"/></svg></div><svg class="a" style="left:413px;top:344px" width="16" height="16" ><use href="#i-role"/></svg><div class="a dt lnk" style="left:439.43px;top:345px;letter-spacing:-0.075px">System Administrator</div>
<div class="a dt" style="left:738.97px;top:345px">chandana</div>
<div class="a drow sel" style="top:363px"></div><div class="a cb" style="left:397px;top:368px"><svg width="11" height="11"><path d="M2 5.2L4.3 7.8L9 2.5" stroke="#000" stroke-width="1.9" fill="none"/></svg></div><div class="a" style="left:395px;top:366px;width:17px;height:17px;border:1px dotted #000"></div><svg class="a" style="left:413px;top:365px" width="16" height="16" ><use href="#i-role"/></svg><div class="a dt lnk" style="left:439.43px;top:366px;letter-spacing:-0.327px">System Customizer</div>
<div class="a dt" style="left:738.97px;top:366px">chandana</div>
<div class="a drow" style="top:384px"></div><svg class="a" style="left:413px;top:386px" width="16" height="16" ><use href="#i-role"/></svg><div class="a dt" style="left:439.28px;top:387px;letter-spacing:0.046px">Vice President of Marketing</div>
<div class="a dt" style="left:738.97px;top:387px">chandana</div>
<div class="a" style="left:413px;top:407px;width:16px;height:1px;overflow:hidden"><svg width="16" height="16" style="display:block"><use href="#i-role"/></svg></div><div class="a" id="dvsb"></div><div class="a sbtn" style="left:1012px;top:132px;width:17px;height:17px"><svg width="15" height="15"><path d="M3.7 9.3L7.5 5L11.3 9.3Z" fill="#1d1d1d"/></svg></div><div class="a" id="dvthumb"></div><div class="a sbtn" style="left:1012px;top:391px;width:17px;height:17px"><svg width="15" height="15"><path d="M3.7 5.7L7.5 10L11.3 5.7Z" fill="#1d1d1d"/></svg></div>
<div class="a" id="dhsb"></div><div class="a sbtn" style="left:395px;top:408px;width:17px;height:17px"><svg width="15" height="15"><path d="M8.3 4L3.8 7.5L8.3 11Z" fill="#1d1d1d"/></svg></div><div class="a sbtn" style="left:995px;top:408px;width:17px;height:17px"><svg width="15" height="15"><path d="M6 4L10.5 7.5L6 11Z" fill="#1d1d1d"/></svg></div><div class="a" id="dhthumb"></div>
<div class="a" id="status"></div><div class="a dt" style="left:401.5px;top:429px;letter-spacing:-0.118px">1 - 14 of 14 (4 selected)</div>
<div class="a" id="fs"></div><div class="a" id="fsl"></div><div class="a dt" style="left:406.48px;top:447px;letter-spacing:-0.08px">Fallback</div>
<div class="a cb" style="left:404px;top:470px"></div><div class="a dt" style="left:438.48px;top:468px;letter-spacing:0.123px">Enabled for fallback</div>
<div class="a" id="dsep"></div><div class="a" id="rstrip"></div><div class="a" id="rframe"></div>
<div class="a btn" style="left:399px;top:513px;width:84px">Help</div><div class="a btn" style="left:854px;top:513px;width:84px">OK</div><div class="a btn" style="left:941px;top:513px;width:84px">Cancel</div>
</div>
</body></html>
